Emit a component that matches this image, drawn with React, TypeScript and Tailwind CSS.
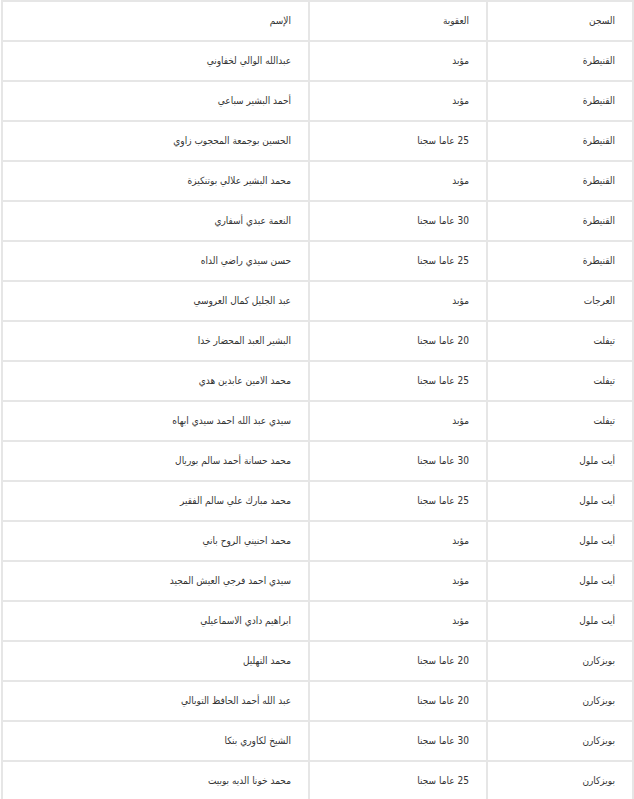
import React from "react";

const rows: [string, string, string][] = [
  ["القنيطرة", "مؤبد", "عبدالله الوالي لخفاوني"],
  ["القنيطرة", "مؤبد", "أحمد البشير سباعي"],
  ["القنيطرة", "25 عاما سجنا", "الحسين بوجمعة المحجوب زاوي"],
  ["القنيطرة", "مؤبد", "محمد البشير علالي بوتنكيزة"],
  ["القنيطرة", "30 عاما سجنا", "النعمة عبدي أسفاري"],
  ["القنيطرة", "25 عاما سجنا", "حسن سيدي راضي الداه"],
  ["العرجات", "مؤبد", "عبد الجليل كمال العروسي"],
  ["تيفلت", "20 عاما سجنا", "البشير العبد المحضار خدا"],
  ["تيفلت", "25 عاما سجنا", "محمد الامين عابدين هدي"],
  ["تيفلت", "مؤبد", "سيدي عبد الله احمد سيدي ابهاه"],
  ["أيت ملول", "30 عاما سجنا", "محمد حسانة أحمد سالم بوريال"],
  ["أيت ملول", "25 عاما سجنا", "محمد مبارك علي سالم الفقير"],
  ["أيت ملول", "مؤبد", "محمد احنيني الروح باني"],
  ["أيت ملول", "مؤبد", "سيدي احمد فرجي العيش المجيد"],
  ["أيت ملول", "مؤبد", "ابراهيم دادي الاسماعيلي"],
  ["بويزكارن", "20 عاما سجنا", "محمد التهليل"],
  ["بويزكارن", "20 عاما سجنا", "عبد الله أحمد الحافظ التوبالي"],
  ["بويزكارن", "30 عاما سجنا", "الشيخ لكاوري بنكا"],
  ["بويزكارن", "25 عاما سجنا", "محمد خونا الديه بوبيت"],
];

const cell =
  "border-2 border-[#e6e6e6] h-[40px] px-[17px] text-right align-middle font-normal";

export default function App() {
  return (
    <div
      dir="rtl"
      className="bg-white text-[#333] text-[10px] leading-[16px]"
      style={{ fontFamily: '"DejaVu Sans Condensed", "DejaVu Sans", sans-serif' }}
    >
      <table className="w-[633px] border-collapse table-fixed">
        <colgroup>
          <col className="w-[146px]" />
          <col className="w-[178px]" />
          <col />
        </colgroup>
        <thead>
          <tr>
            <th className={cell}>السجن</th>
            <th className={cell}>العقوبة</th>
            <th className={cell}>الإسم</th>
          </tr>
        </thead>
        <tbody>
          {rows.map((r, i) => (
            <tr key={i}>
              <td className={cell}>{r[0]}</td>
              <td className={cell}>{r[1]}</td>
              <td className={cell}>{r[2]}</td>
            </tr>
          ))}
        </tbody>
      </table>
    </div>
  );
}
